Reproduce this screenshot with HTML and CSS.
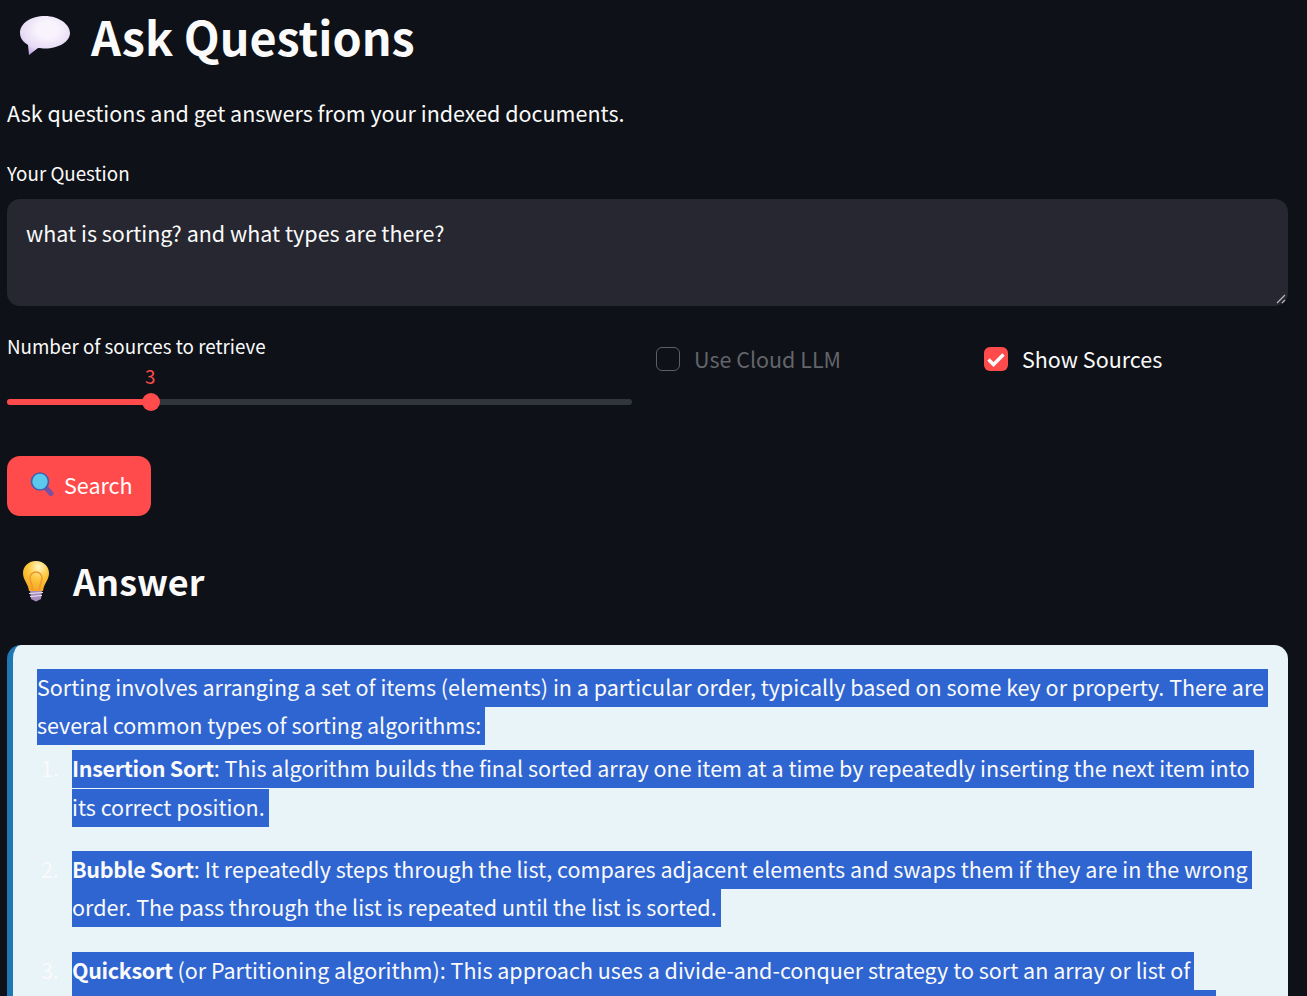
FILE: index.html
```html
<!DOCTYPE html>
<html lang="en">

<head>
    <meta charset="UTF-8">
    <title>Ask Questions</title>
    <link rel="stylesheet" href="styles.css">
</head>

<body>
    <main class="page">
        <h1 class="title">
            <svg class="title-icon" viewBox="0 0 54 44" width="54" height="44">
                <defs>
                    <radialGradient id="bubbleFill" cx="0.55" cy="0.35" r="0.7">
                        <stop offset="0.3" stop-color="#f8f3fc" />
                        <stop offset="0.75" stop-color="#e6daf5" />
                        <stop offset="1" stop-color="#bba6e4" />
                    </radialGradient>
                </defs>
                <path d="M27 2C13 2 2 9 2 19c0 5 3 9 8 12l1 10 9-7c2 .3 5 .5 7 .5 14 0 25-7 25-15.500S41 2 27 2z" fill="url(#bubbleFill)" />
            </svg>
            Ask Questions
        </h1>
        <p class="intro">Ask questions and get answers from your indexed documents.</p>

        <label class="field-label">Your Question</label>
        <div class="question-box">
            what is sorting? and what types are there?
            <svg class="resize-grip" viewBox="0 0 10 10" width="10" height="10">
                <path d="M1 9L9 1M6 9L9 6" stroke="#b8b8bc" stroke-width="1.2" />
            </svg>
        </div>

        <div class="controls">
            <div class="slider-col">
                <div class="field-label">Number of sources to retrieve</div>
                <div class="slider">
                    <span class="slider-value">3</span>
                    <div class="slider-track">
                        <div class="slider-fill"></div>
                        <div class="slider-thumb"></div>
                    </div>
                </div>
            </div>
            <div class="check-col">
                <span class="checkbox"></span>
                <span class="check-label muted">Use Cloud LLM</span>
            </div>
            <div class="check-col">
                <span class="checkbox checked">
                    <svg viewBox="0 0 24 24" width="24" height="24">
                        <path d="M4.500 12.500l5 5L19.500 7.500" fill="none" stroke="#fff" stroke-width="3.400" />
                    </svg>
                </span>
                <span class="check-label">Show Sources</span>
            </div>
        </div>

        <button class="search-btn">
            <svg viewBox="0 0 24 24" width="24" height="24">
                <path d="M16 16l5 5.500" stroke="#7a4fa3" stroke-width="5" stroke-linecap="round" />
                <circle cx="10" cy="9.500" r="8.500" fill="#5cc8ec" stroke="#3f5fb0" stroke-width="1.600" />
            </svg>
            Search
        </button>

        <h2 class="answer-title">
            <svg class="answer-icon" viewBox="0 0 28 42" width="28" height="42">
                <defs>
                    <radialGradient id="bulbFill" cx="0.6" cy="0.2" r="0.8">
                        <stop offset="0" stop-color="#fff6c4" />
                        <stop offset="0.5" stop-color="#fdc83e" />
                        <stop offset="1" stop-color="#f5a623" />
                    </radialGradient>
                </defs>
                <path d="M14 1C6 1 1 7 1 13c0 7 5 10 6 18h14c1-8 6-11 6-18C27 7 22 1 14 1z" fill="url(#bulbFill)" />
                <path d="M10.500 30c0-6-2.500-9-2.500-12a6 6 0 0 1 12 0c0 3-2.500 6-2.500 12" fill="none" stroke="#f0962e" stroke-width="1.400" />
                <path d="M8 31h12l-1 8-5 2.500-5-2.500z" fill="#a78cbc" />
                <path d="M7 33.500l14-1M8 36.500l12-1" stroke="#eee6f2" stroke-width="1.100" />
            </svg>
            Answer
        </h2>

        <section class="answer-card">
            <span class="sel">Sorting involves arranging a set of items (elements) in a particular order, typically based on some key or property. There are</span>
            <span class="sel">several common types of sorting algorithms:</span>
            <ol class="answer-list">
                <li class="item item-first" data-num="1.">
                    <span class="sel"><strong>Insertion Sort</strong>: This algorithm builds the final sorted array one item at a time by repeatedly inserting the next item into</span>
                    <span class="sel">its correct position.</span>
                </li>
                <li class="item" data-num="2.">
                    <span class="sel"><strong>Bubble Sort</strong>: It repeatedly steps through the list, compares adjacent elements and swaps them if they are in the wrong</span>
                    <span class="sel">order. The pass through the list is repeated until the list is sorted.</span>
                </li>
                <li class="item" data-num="3.">
                    <span class="sel"><strong>Quicksort</strong> (or Partitioning algorithm): This approach uses a divide-and-conquer strategy to sort an array or list of</span>
                    <span class="sel">elements by selecting a pivot and partitioning the other elements into two groups around their chosen pivot value.</span>
                </li>
            </ol>
        </section>
    </main>
</body>

</html>
```

FILE: styles.css
```css
html,
body {
    height: 996px;
    margin: 0;
    overflow: hidden;
}

body {
    font-family: "Noto Sans CJK JP", "Noto Sans", sans-serif;
    background-color: #0e1117;
    color: #fafafa;
}

.page {
    padding: 0 19px 0 7px;
}

.title {
    display: flex;
    align-items: center;
    gap: 19px;
    height: 72px;
    margin: 0 0 0 11px;
    font-size: 46.7px;
    font-weight: 700;
    line-height: 72px;
}

.title-icon {
    flex: none;
}

.intro {
    height: 38px;
    margin: 23px 0 0;
    font-size: 21.5px;
    line-height: 36px;
}

.field-label {
    display: block;
    height: 30px;
    font-size: 18.8px;
    line-height: 28px;
}

label.field-label {
    margin-top: 26px;
}

.question-box {
    position: relative;
    box-sizing: border-box;
    height: 107px;
    margin-top: 10px;
    padding: 15px 19px;
    border-radius: 13px;
    background-color: #262730;
    font-size: 21.5px;
    line-height: 38px;
}

.resize-grip {
    position: absolute;
    right: 2px;
    bottom: 2px;
}

.controls {
    display: grid;
    grid-template-columns: 625px 1fr 1fr;
    gap: 24px;
    margin-top: 26px;
}

.slider {
    position: relative;
    height: 44px;
}

.slider-value {
    position: absolute;
    left: 138px;
    top: -1px;
    color: #ff4b4b;
    font-size: 18.8px;
    line-height: 30px;
}

.slider-track {
    position: absolute;
    left: 0;
    right: 0;
    top: 37px;
    height: 6px;
    border-radius: 3px;
    background-color: #31353d;
}

.slider-fill {
    width: 144px;
    height: 6px;
    border-radius: 3px;
    background-color: #ff4b4b;
}

.slider-thumb {
    position: absolute;
    left: 135px;
    top: -6px;
    width: 18px;
    height: 18px;
    border-radius: 50%;
    background-color: #ff4b4b;
}

.check-col {
    display: flex;
    align-items: center;
    gap: 14px;
    height: 24px;
    padding-top: 15px;
}

.checkbox {
    box-sizing: border-box;
    width: 24px;
    height: 24px;
    border: 1px solid #5c5f66;
    border-radius: 6px;
}

.checkbox.checked {
    border: none;
    background-color: #ff4b4b;
}

.checkbox svg {
    display: block;
}

.check-label {
    font-size: 21.5px;
    line-height: 38px;
}

.muted {
    color: #63656b;
}

.search-btn {
    display: flex;
    align-items: center;
    gap: 10px;
    box-sizing: border-box;
    width: 144px;
    height: 60px;
    margin-top: 50px;
    padding: 0 0 4px 23px;
    border: none;
    border-radius: 13px;
    background-color: #ff4b4b;
    color: #fff;
    font-family: inherit;
    font-size: 21.5px;
}

.answer-title {
    display: flex;
    align-items: center;
    gap: 23px;
    height: 52px;
    margin: 38px 0 0 11px;
    font-size: 36px;
    font-weight: 700;
    line-height: 52px;
}

.answer-icon {
    flex: none;
    margin: 2px 0 0 4px;
}

.answer-card {
    box-sizing: border-box;
    margin-top: 39px;
    padding: 24px 20px 24px 24px;
    border-left: 6px solid #1f77b4;
    border-radius: 14px;
    background-color: #e8f4f8;
    color: #fafafa;
    font-size: 21.5px;
}

/* text was selected in the screenshot, so each line gets its own block */
.sel {
    display: block;
    width: fit-content;
    height: 38px;
    padding-right: 4px;
    background-color: #2f65d1;
    line-height: 36px;
    white-space: nowrap;
}

.sel strong {
    letter-spacing: -0.33px;
}

.answer-list {
    margin: 5px 0 0;
    padding: 0 0 0 35px;
    list-style: none;
}

.item {
    position: relative;
    margin-bottom: 25px;
}

.item-first {
    margin-bottom: 24px;
}

.item::before {
    content: attr(data-num);
    position: absolute;
    left: -31px;
    top: 0;
    line-height: 36px;
}

.item-first .sel + .sel {
    margin-top: 1px;
}
```
